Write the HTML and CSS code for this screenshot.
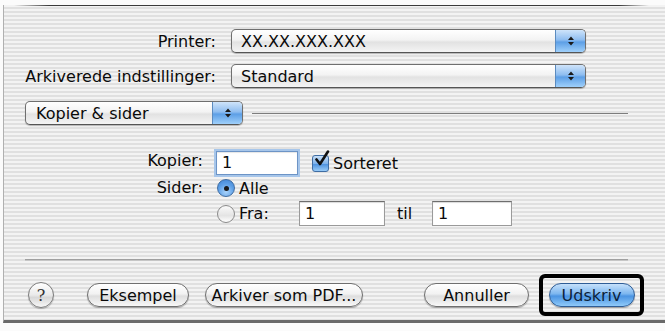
FILE: index.html
```html
<!DOCTYPE html>
<html>
<head>
<meta charset="utf-8">
<link rel="stylesheet" href="styles.css">
</head>
<body>
<div class="sheet">
  <div class="content">
    <div class="top-grid">
      <span class="lbl">Printer:</span>
      <div class="popup">
        <span class="popup-text">XX.XX.XXX.XXX</span>
        <span class="stepper"><svg width="8" height="12" viewBox="0 0 8 12"><path d="M4 1.5 L7 5 H1Z M4 10.5 L7 7 H1Z" fill="#1a1a1a"/></svg></span>
      </div>
      <span class="lbl">Arkiverede indstillinger:</span>
      <div class="popup">
        <span class="popup-text">Standard</span>
        <span class="stepper"><svg width="8" height="12" viewBox="0 0 8 12"><path d="M4 1.5 L7 5 H1Z M4 10.5 L7 7 H1Z" fill="#1a1a1a"/></svg></span>
      </div>
    </div>

    <div class="pane-row">
      <div class="popup pane-popup">
        <span class="popup-text">Kopier &amp; sider</span>
        <span class="stepper"><svg width="8" height="12" viewBox="0 0 8 12"><path d="M4 1.5 L7 5 H1Z M4 10.5 L7 7 H1Z" fill="#1a1a1a"/></svg></span>
      </div>
      <div class="pane-line"></div>
    </div>

    <div class="group">
      <span class="glbl">Kopier:</span>
      <div class="ctrls">
        <div class="field focus w-copies">1</div>
        <span class="check"><svg width="20" height="20" viewBox="0 0 20 20"><path d="M4.5 9.5 L8 14 L16 1.5" fill="none" stroke="#111" stroke-width="2.6" stroke-linecap="round" stroke-linejoin="round"/></svg></span>
        <span class="ctext">Sorteret</span>
      </div>
      <span class="glbl">Sider:</span>
      <div class="ctrls">
        <span class="radio on"><span class="dot"></span></span>
        <span class="ctext">Alle</span>
      </div>
      <span class="glbl"></span>
      <div class="ctrls">
        <span class="radio"></span>
        <span class="ctext fra">Fra:</span>
        <div class="field w-from">1</div>
        <span class="til">til</span>
        <div class="field w-to">1</div>
      </div>
    </div>

    <div class="sep"></div>

    <div class="buttons">
      <span class="help">?</span>
      <span class="btn w-eks">Eksempel</span>
      <span class="btn w-pdf">Arkiver som PDF...</span>
      <span class="spacer"></span>
      <span class="btn w-ann">Annuller</span>
      <span class="highlight"><span class="btn default w-uds">Udskriv</span></span>
    </div>
  </div>
</div>
</body>
</html>
```

FILE: styles.css
```css
html, body {
  margin: 0;
  padding: 0;
  background: #fbfbfb;
}

body {
  width: 665px;
  height: 331px;
  overflow: hidden;
  font-family: "DejaVu Sans", "Liberation Sans", sans-serif;
  font-size: 16px;
  color: #0a0a0a;
}

.sheet {
  position: relative;
  margin: 5px 0 0 3px;
  height: 315px;
  border-left: 1px solid #b0b0b0;
  border-bottom: 3px solid #6a6a6a;
  background: repeating-linear-gradient(to bottom, #f3f3f3 0 2px, #e0e0e0 2px 4px);
}

.sheet::before {
  content: "";
  position: absolute;
  left: 0;
  right: 0;
  top: 0;
  height: 1px;
  background: linear-gradient(to right, rgba(60,60,60,0) 10px, #3a3a3a 45px, #3a3a3a 615px, rgba(60,60,60,0) 645px);
}

.content {
  padding: 24px 37px 0 21px;
}

.top-grid {
  display: grid;
  grid-template-columns: 191px 355px;
  column-gap: 15px;
  row-gap: 11px;
  align-items: center;
}

.lbl {
  text-align: right;
  white-space: nowrap;
}

.popup {
  display: flex;
  align-items: center;
  height: 22px;
  border: 1px solid #6f6f6f;
  border-bottom-color: #555;
  border-radius: 5px;
  background: linear-gradient(to bottom, #ffffff 0%, #f3f3f3 45%, #e2e2e2 55%, #f4f4f4 100%);
  box-shadow: 0 1px 1px rgba(0,0,0,0.25);
  overflow: hidden;
}

.popup-text {
  flex: 1;
  padding-left: 9px;
  white-space: nowrap;
}

.stepper {
  width: 29px;
  height: 100%;
  display: flex;
  align-items: center;
  justify-content: center;
  border-left: 1px solid #5b8bbf;
  background: linear-gradient(to bottom, #cfe4fa 0%, #8ebdf0 45%, #5d9fe6 55%, #9fd0fb 100%);
}

.pane-row {
  display: flex;
  align-items: center;
  margin-top: 13px;
}

.pane-popup {
  width: 216px;
}

.pane-popup .popup-text {
  padding-left: 10px;
}

.pane-line {
  flex: 1;
  height: 1px;
  margin-left: 9px;
  background: #7d7d7d;
}

.group {
  display: grid;
  grid-template-columns: 178px auto;
  grid-template-rows: 24px 20px 25px;
  column-gap: 13px;
  row-gap: 3px;
  margin-top: 26px;
  align-items: center;
}

.glbl {
  text-align: right;
  align-self: start;
}

.ctrls {
  display: flex;
  align-items: center;
  height: 100%;
}

.field {
  box-sizing: border-box;
  height: 24px;
  line-height: 22px;
  padding-left: 5px;
  background: #fff;
  border: 1px solid #9a9a9a;
  border-top-color: #6e6e6e;
  box-shadow: inset 0 1px 1px rgba(0,0,0,0.15);
}

.field.focus {
  border: 1px solid #6d94c6;
  box-shadow: 0 0 0 2px #a7c6ea, inset 0 1px 1px rgba(0,0,0,0.1);
}

.w-copies { width: 82px; }
.w-from { width: 86px; height: 25px; line-height: 23px; }
.w-to { width: 80px; height: 25px; line-height: 23px; }

.check {
  position: relative;
  width: 15px;
  height: 15px;
  margin-left: 14px;
  border: 1px solid #3f6da3;
  border-radius: 3px;
  background: linear-gradient(to bottom, #c8e0f8 0%, #7fb2ea 50%, #4f93df 55%, #98cbf7 100%);
}

.check svg {
  position: absolute;
  left: -1px;
  top: -6px;
}

.ctext {
  margin-left: 4px;
}

.radio {
  display: flex;
  align-items: center;
  justify-content: center;
  width: 16px;
  height: 16px;
  margin-left: 1px;
  border: 1px solid #8a8a8a;
  border-radius: 50%;
  background: linear-gradient(to bottom, #fafafa 0%, #e4e4e4 60%, #ffffff 100%);
}

.radio.on {
  border-color: #3f6da3;
  background: radial-gradient(circle at 50% 75%, #a9d3fb 0%, #5d9fe6 55%, #3f82d2 100%);
}

.dot {
  width: 5px;
  height: 5px;
  border-radius: 50%;
  background: #1a1a1a;
}

.fra {
  width: 60px;
}

.til {
  margin-left: 12px;
  width: 35px;
}

.sep {
  margin-top: 33px;
  height: 2px;
  background: linear-gradient(to bottom, #a0a0a0 0 1px, #c6c6c6 1px 2px);
}

.buttons {
  display: flex;
  align-items: center;
  margin-top: 13px;
}

.help {
  display: flex;
  align-items: center;
  justify-content: center;
  width: 24px;
  height: 24px;
  margin-left: 3px;
  border: 1px solid #7c7c7c;
  border-radius: 50%;
  background: linear-gradient(to bottom, #ffffff 0%, #eaeaea 50%, #d8d8d8 60%, #f7f7f7 100%);
  box-shadow: 0 1px 1px rgba(0,0,0,0.25);
  font-family: "DejaVu Serif", serif;
  font-size: 16px;
  color: #333;
}

.btn {
  display: flex;
  align-items: center;
  justify-content: center;
  box-sizing: border-box;
  height: 24px;
  border: 1px solid #6f6f6f;
  border-radius: 12px;
  background: linear-gradient(to bottom, #ffffff 0%, #f2f2f2 45%, #dedede 55%, #f8f8f8 100%);
  box-shadow: 0 1px 1px rgba(0,0,0,0.3);
  white-space: nowrap;
}

.w-eks { width: 102px; margin-left: 33px; }
.w-pdf { width: 158px; margin-left: 16px; }
.w-ann { width: 105px; }
.w-uds { width: 86px; }

.spacer { flex: 1; }

.btn.default {
  border-color: #2f5d96;
  background: linear-gradient(to bottom, #c6e1fb 0%, #7cb6ef 45%, #4b94e3 55%, #8fcaf9 100%);
  color: #0d1f3a;
}

.highlight {
  display: flex;
  align-items: center;
  justify-content: center;
  width: 97px;
  height: 34px;
  margin-left: 10px;
  margin-right: -16px;
  border: 4px solid #000;
  border-radius: 6px;
}
```
